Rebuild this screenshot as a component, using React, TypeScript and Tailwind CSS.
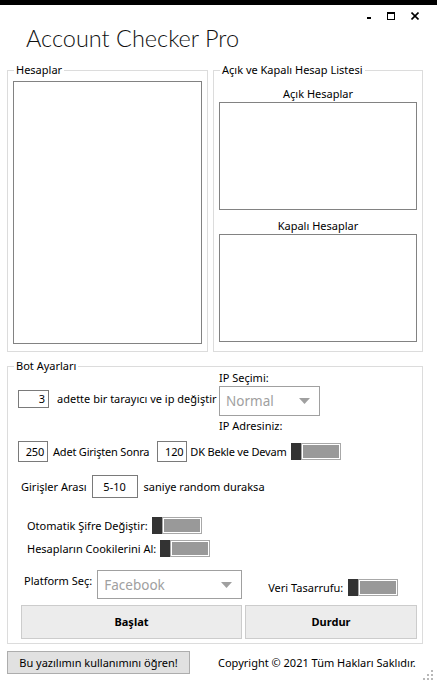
import React from "react";

function Toggle() {
  return (
    <div className="flex h-[17px] w-[50px] shrink-0">
      <div className="w-[10px] h-full bg-[#333333]" />
      <div className="flex-1 h-full border border-[#a8a8a8] p-[1px] bg-white">
        <div className="w-full h-full bg-[#999999]" />
      </div>
    </div>
  );
}

function Box({ w, h, text, align = "right" }: { w: number; h: number; text: string; align?: "right" | "center" }) {
  return (
    <div
      className={`shrink-0 border border-[#7a7a7a] bg-white flex items-center ${align === "right" ? "justify-end pr-[3px]" : "justify-center"}`}
      style={{ width: w, height: h }}
    >
      {text}
    </div>
  );
}

function Combo({ w, h, text }: { w: number; h: number; text: string }) {
  return (
    <div
      className="shrink-0 border border-[#a0a0a0] bg-white flex items-center justify-between pl-[6px] pr-[9px]"
      style={{ width: w, height: h }}
    >
      <span className="text-[13.5px] text-[#a0a0a0]">{text}</span>
      <svg width="11" height="6" viewBox="0 0 11 6">
        <path d="M0 0 L11 0 L5.5 6 Z" fill="#a0a0a0" />
      </svg>
    </div>
  );
}

export default function App() {
  return (
    <div className="w-[437px] h-[686px] bg-white text-black text-[11px] leading-[14px] font-['Noto_Sans',sans-serif] overflow-hidden flex flex-col">
      <div className="h-[5px] bg-black" />
      {/* window controls */}
      <div className="h-[12px] flex items-start justify-end pr-[18px] mt-[7px] gap-0">
        <div className="w-[4px] h-[2px] bg-black mt-[5px] mr-[16px]" />
        <div className="w-[8px] h-[8px] border border-black border-t-2 mr-[16px]" />
        <svg width="8" height="8" viewBox="0 0 8 8" className="mt-[0px]">
          <path d="M0.5 0.5 L7.5 7.5 M7.5 0.5 L0.5 7.5" stroke="black" strokeWidth="1.6" />
        </svg>
      </div>
      {/* title */}
      <div className="h-[38px] pl-[26px] flex items-start">
        <span className="font-['Lato',sans-serif] font-light text-[23.5px] leading-[28px] mt-[0px] text-[#111]">Account Checker Pro</span>
      </div>

      {/* top groups */}
      <div className="flex pl-[7px] gap-[5px]">
        <fieldset className="w-[201px] h-[290px] border border-[#dcdcdc] px-[5px] pb-[7px] m-0 flex flex-col">
          <legend className="px-[2px] ml-[1px] leading-[16px]">Hesaplar</legend>
          <div className="mt-[3px] flex-1 border border-[#828282] bg-white" />
        </fieldset>
        <fieldset className="w-[210px] h-[290px] border border-[#dcdcdc] px-[5px] pb-[9px] m-0 flex flex-col">
          <legend className="px-[2px] ml-[1px] leading-[16px]">Açık ve Kapalı Hesap Listesi</legend>
          <div className="text-center mt-[8px] leading-[16px]">Açık Hesaplar</div>
          <div className="mt-[0px] h-[108px] border border-[#828282] bg-white" />
          <div className="text-center mt-[8px] leading-[16px]">Kapalı Hesaplar</div>
          <div className="mt-[0px] h-[108px] border border-[#828282] bg-white" />
        </fieldset>
      </div>

      {/* bot group */}
      <fieldset className="ml-[7px] mt-[6px] w-[416px] h-[286px] border border-[#dcdcdc] m-0 p-0 flex flex-col">
        <legend className="px-[2px] ml-[6px] leading-[16px]">Bot Ayarları</legend>
        {/* row 1 */}
        <div className="flex items-start">
          <div className="w-[211px] shrink-0 flex items-center pl-[10px] mt-[16px] h-[18px]">
            <Box w={31} h={18} text="3" />
            <span className="ml-[8px] whitespace-nowrap">adette bir tarayıcı ve ip değiştir</span>
          </div>
          <div className="flex flex-col mt-[-3px]">
            <span className="leading-[14px]">IP Seçimi:</span>
            <div className="mt-[1px]">
              <Combo w={101} h={30} text="Normal" />
            </div>
            <span className="mt-[3px] leading-[14px]">IP Adresiniz:</span>
          </div>
        </div>
        {/* row 2 */}
        <div className="flex items-center pl-[10px] mt-[8px] h-[21px] tracking-[-0.2px]">
          <Box w={30} h={21} text="250" />
          <span className="ml-[5px] whitespace-nowrap">Adet Girişten Sonra</span>
          <div className="ml-[8px]">
            <Box w={30} h={21} text="120" />
          </div>
          <span className="ml-[3px] whitespace-nowrap">DK Bekle ve Devam</span>
          <div className="ml-[5px]">
            <Toggle />
          </div>
        </div>
        {/* row 3 */}
        <div className="flex items-center pl-[13px] mt-[13px] h-[23px]">
          <span className="whitespace-nowrap">Girişler Arası</span>
          <div className="ml-[5px]">
            <Box w={46} h={23} text="5-10" align="center" />
          </div>
          <span className="ml-[6px] whitespace-nowrap">saniye random duraksa</span>
        </div>
        {/* row 4 */}
        <div className="flex items-center pl-[19px] mt-[19px] h-[17px]">
          <span className="whitespace-nowrap">Otomatik Şifre Değiştir:</span>
          <div className="ml-[4px]">
            <Toggle />
          </div>
        </div>
        {/* row 5 */}
        <div className="flex items-center pl-[19px] mt-[6px] h-[17px]">
          <span className="whitespace-nowrap">Hesapların Cookilerini Al:</span>
          <div className="ml-[4px]">
            <Toggle />
          </div>
        </div>
        {/* row 6 */}
        <div className="flex items-start pl-[16px] mt-[13px] h-[29px]">
          <span className="whitespace-nowrap mt-[4px]">Platform Seç:</span>
          <div className="ml-[5px]">
            <Combo w={145} h={29} text="Facebook" />
          </div>
          <span className="whitespace-nowrap ml-[26px] mt-[11px]">Veri Tasarrufu:</span>
          <div className="ml-[5px] mt-[9px]">
            <Toggle />
          </div>
        </div>
        {/* row 7 */}
        <div className="flex pl-[13px] mt-[6px] gap-[3px]">
          <button className="w-[221px] h-[34px] bg-[#ececec] border border-[#cccccc] font-bold">Başlat</button>
          <button className="w-[172px] h-[34px] bg-[#ececec] border border-[#cccccc] font-bold">Durdur</button>
        </div>
      </fieldset>

      {/* bottom row */}
      <div className="flex items-center pl-[7px] mt-[7px] h-[23px]">
        <button className="w-[183px] h-[23px] bg-[#e1e1e1] border border-[#adadad]">Bu yazılımın kullanımını öğren!</button>
        <span className="ml-[28px] whitespace-nowrap">Copyright © 2021 Tüm Hakları Saklıdır.</span>
      </div>
      <div className="flex justify-end pr-[4px] mt-[-4px]">
        <svg width="10" height="10" viewBox="0 0 10 10">
          <rect x="8" y="0" width="2" height="2" fill="#b8b8b8" />
          <rect x="4" y="4" width="2" height="2" fill="#b8b8b8" />
          <rect x="8" y="4" width="2" height="2" fill="#b8b8b8" />
          <rect x="0" y="8" width="2" height="2" fill="#b8b8b8" />
          <rect x="4" y="8" width="2" height="2" fill="#b8b8b8" />
          <rect x="8" y="8" width="2" height="2" fill="#b8b8b8" />
        </svg>
      </div>
    </div>
  );
}
